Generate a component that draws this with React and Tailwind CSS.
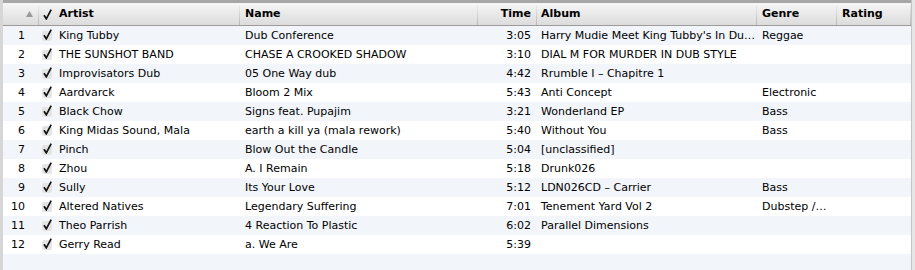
import React from 'react';

const tracks = [
  ['1', 'King Tubby', 'Dub Conference', '3:05', "Harry Mudie Meet King Tubby's In Du…", 'Reggae'],
  ['2', 'THE SUNSHOT BAND', 'CHASE A CROOKED SHADOW', '3:10', 'DIAL M FOR MURDER IN DUB STYLE', ''],
  ['3', 'Improvisators Dub', '05 One Way dub', '4:42', 'Rrumble I – Chapitre 1', ''],
  ['4', 'Aardvarck', 'Bloom 2 Mix', '5:43', 'Anti Concept', 'Electronic'],
  ['5', 'Black Chow', 'Signs feat. Pupajim', '3:21', 'Wonderland EP', 'Bass'],
  ['6', 'King Midas Sound, Mala', 'earth a kill ya (mala rework)', '5:40', 'Without You', 'Bass'],
  ['7', 'Pinch', 'Blow Out the Candle', '5:04', '[unclassified]', ''],
  ['8', 'Zhou', 'A. I Remain', '5:18', 'Drunk026', ''],
  ['9', 'Sully', 'Its Your Love', '5:12', 'LDN026CD – Carrier', 'Bass'],
  ['10', 'Altered Natives', 'Legendary Suffering', '7:01', 'Tenement Yard Vol 2', 'Dubstep /…'],
  ['11', 'Theo Parrish', '4 Reaction To Plastic', '6:02', 'Parallel Dimensions', ''],
  ['12', 'Gerry Read', 'a. We Are', '5:39', '', ''],
];

const cols = 'grid grid-cols-[36px_16px_185px_238px_59px_220px_80px_74px]';

// checkmark: short stroke down, long stroke up to the right
const Check = ({ className }) => (
  <svg width="9" height="11" viewBox="0 0 9 11" className={className}>
    <path d="M1 6.2 L3.3 9.8 L8.2 0.6" fill="none" stroke="#111" strokeWidth="1.7" />
  </svg>
);

const Sep = () => <div className="absolute right-0 top-[2px] bottom-0 w-px bg-gradient-to-b from-[#ececec] to-[#b8b8b8]" />;

export default function App() {
  return (
    <div className="w-[915px] h-[270px] overflow-hidden bg-white flex font-['DejaVu_Sans',sans-serif] text-[11px] text-black">
      <div className="w-[3px] shrink-0 bg-[#d6d6d6]" />
      <div className="w-[908px] shrink-0 flex flex-col">
        <div className={`${cols} h-[26px] border-t-[3px] border-[#a6a6a6] border-b border-b-[#9c9c9c] bg-gradient-to-b from-[#f6f6f6] to-[#dcdcdc] font-bold leading-[22px]`}>
          <div className="relative flex justify-end items-center pr-[6px]">
            <svg width="7" height="6" viewBox="0 0 7 6"><path d="M3.5 0 L7 6 L0 6 Z" fill="#9a9a9a" /></svg>
            <Sep />
          </div>
          <div className="flex items-center pl-[4px]">
            <Check />
          </div>
          <div className="relative pl-[4px]">Artist<Sep /></div>
          <div className="relative pl-[5px]">Name<Sep /></div>
          <div className="relative text-right pr-[6px]">Time<Sep /></div>
          <div className="relative pl-[4px]">Album<Sep /></div>
          <div className="relative pl-[5px]">Genre<Sep /></div>
          <div className="relative pl-[5px]">Rating<Sep /></div>
        </div>
        {tracks.map((t, i) => (
          <div key={t[0]} className={`${cols} h-[19px] leading-[19px] whitespace-nowrap ${i % 2 === 0 ? 'bg-[#f2f5fa]' : 'bg-white'}`}>
            <div className="text-right pr-[14px]">{t[0]}</div>
            <div className="flex items-center pl-[3px]">
              <div className="relative w-[10px] h-[10px] rounded-[2px] bg-[#e4e4e4]">
                <Check className="absolute left-[1px] top-[-2px]" />
              </div>
            </div>
            <div className="pl-[4px] overflow-hidden">{t[1]}</div>
            <div className="pl-[5px] overflow-hidden">{t[2]}</div>
            <div className="text-right pr-[6px]">{t[3]}</div>
            <div className="pl-[4px] overflow-hidden">{t[4]}</div>
            <div className="pl-[5px] overflow-hidden">{t[5]}</div>
            <div />
          </div>
        ))}
        <div className="h-[19px] bg-[#f2f5fa]" />
      </div>
      <div className="w-[4px] shrink-0 border-l border-[#c4c4c4] bg-[#e6e6e6]" />
    </div>
  );
}
